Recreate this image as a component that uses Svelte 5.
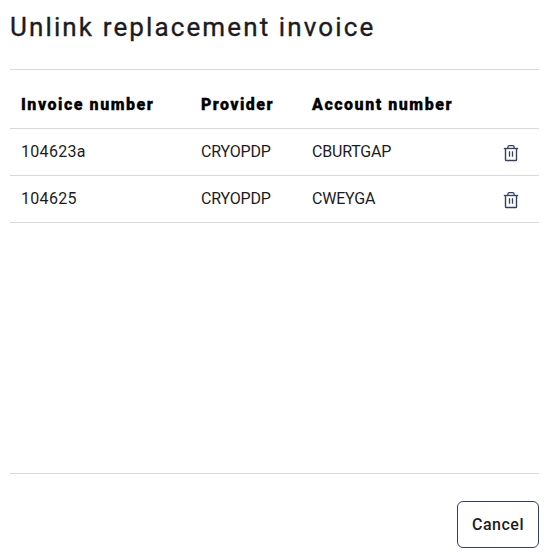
<script>
  const invoices = [
    { number: '104623a', provider: 'CRYOPDP', account: 'CBURTGAP' },
    { number: '104625', provider: 'CRYOPDP', account: 'CWEYGA' }
  ];
</script>

<section class="dialog">
  <h1>Unlink replacement invoice</h1>
  <div class="body">
    <div class="row head">
      <span class="h-number">Invoice number</span>
      <span class="h-provider">Provider</span>
      <span class="h-account">Account number</span>
    </div>
    {#each invoices as invoice}
      <div class="row">
        <span class="number">{invoice.number}</span>
        <span class="code">{invoice.provider}</span>
        <span class="code">{invoice.account}</span>
        <button class="remove" aria-label="Unlink invoice">
          <svg width="16" height="18" viewBox="0 0 16 18" fill="none" stroke="#35405c">
            <path d="M0.8 4.5H15.2" stroke-width="1.3" />
            <path d="M4.9 4.2V3Q4.9 1.6 6.3 1.6H9.7Q11.1 1.6 11.1 3V4.2" stroke-width="1.3" />
            <path d="M2.5 4.5V15.7Q2.5 16.5 3.3 16.5H12.7Q13.5 16.5 13.5 15.7V4.5" stroke-width="1.4" />
            <path d="M6.5 7.3V12.8M9.5 7.3V12.8" stroke-width="1.3" />
          </svg>
        </button>
      </div>
    {/each}
  </div>
  <footer><button class="cancel">Cancel</button></footer>
</section>

<style>
  :global(body) { background: #fff; }
  .dialog {
    box-sizing: border-box;
    width: 546px;
    height: 553px;
    padding: 0 7px 0 10px;
    display: flex;
    flex-direction: column;
    font-family: Roboto, "Liberation Sans", sans-serif;
    color: #1c1c1e;
    overflow: hidden;
  }
  h1 {
    margin: 0;
    height: 69px;
    box-sizing: border-box;
    padding-top: 12px;
    font-size: 26px;
    line-height: 30px;
    font-weight: 400;
    letter-spacing: 2.12px;
    -webkit-text-stroke: 0.35px currentColor;
    white-space: nowrap;
  }
  .body {
    box-sizing: border-box;
    height: 405px;
    border-top: 1px solid #d9d9da;
    border-bottom: 1px solid #d9d9da;
  }
  .row {
    box-sizing: border-box;
    height: 47px;
    display: grid;
    grid-template-columns: 180px 111px 176px 1fr;
    align-items: center;
    padding-left: 11px;
    border-bottom: 1px solid #d9d9da;
    font-size: 16px;
    line-height: 20px;
    white-space: nowrap;
  }
  .row.head {
    height: 59px;
    padding-top: 12px;
    color: #000;
    font-weight: 900;
    -webkit-text-stroke: 0.3px currentColor;
  }
  .h-number, .h-account { letter-spacing: 1.52px; }
  .h-provider { letter-spacing: 1.42px; }
  .number { letter-spacing: 0.3px; }
  .code { letter-spacing: -0.2px; }
  button {
    font: inherit;
    color: inherit;
    background: #fff;
    padding: 0;
  }
  .remove {
    border: 0;
    width: 46px;
    height: 46px;
    padding: 2px 0 0 15px;
    display: flex;
    align-items: center;
  }
  footer {
    display: flex;
    justify-content: flex-end;
    padding-top: 27px;
  }
  .cancel {
    box-sizing: border-box;
    width: 82px;
    height: 47px;
    border: 1px solid #35405c;
    border-radius: 6px;
    font-size: 16px;
    font-weight: 500;
    letter-spacing: 0.5px;
  }
</style>
